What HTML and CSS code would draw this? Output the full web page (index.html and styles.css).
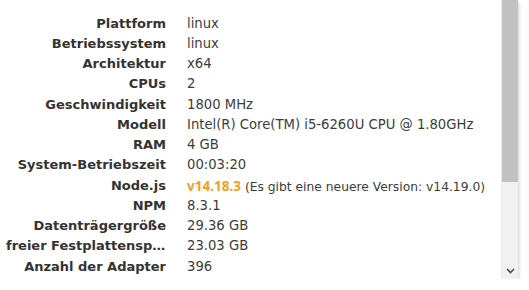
FILE: index.html
```html
<!DOCTYPE html>
<html lang="de">
<head>
<meta charset="utf-8">
<title>Systeminfo</title>
<link rel="stylesheet" href="styles.css">
</head>
<body>
<div class="panel">
  <div class="content">
    <div class="table">
      <div class="row"><div class="label">Plattform</div><div class="value">linux</div></div>
      <div class="row"><div class="label">Betriebssystem</div><div class="value">linux</div></div>
      <div class="row"><div class="label">Architektur</div><div class="value">x64</div></div>
      <div class="row"><div class="label">CPUs</div><div class="value">2</div></div>
      <div class="row"><div class="label">Geschwindigkeit</div><div class="value">1800 MHz</div></div>
      <div class="row"><div class="label">Modell</div><div class="value">Intel(R) Core(TM) i5-6260U CPU @ 1.80GHz</div></div>
      <div class="row"><div class="label">RAM</div><div class="value">4 GB</div></div>
      <div class="row"><div class="label">System-Betriebszeit</div><div class="value">00:03:20</div></div>
      <div class="row"><div class="label">Node.js</div><div class="value"><span class="warn">v14.18.3</span><span class="note"> (Es gibt eine neuere Version: v14.19.0)</span></div></div>
      <div class="row"><div class="label">NPM</div><div class="value">8.3.1</div></div>
      <div class="row"><div class="label">Datenträgergröße</div><div class="value">29.36 GB</div></div>
      <div class="row"><div class="label">freier Festplattenspeicher</div><div class="value">23.03 GB</div></div>
      <div class="row"><div class="label">Anzahl der Adapter</div><div class="value">396</div></div>
      <div class="row"><div class="label">Freier Arbeitsspeicher</div><div class="value">3.1 GB</div></div>
    </div>
  </div>
  <div class="scrollbar">
    <div class="thumb"></div>
    <div class="track"></div>
    <div class="arrow">
      <svg width="9" height="6" viewBox="0 0 9 6"><path d="M1 1 L4.5 4.5 L8 1" fill="none" stroke="#505050" stroke-width="1.6"/></svg>
    </div>
  </div>
</div>
</body>
</html>
```
FILE: styles.css
```css
html, body {
  margin: 0;
  padding: 0;
  background: #ffffff;
}
body {
  font-family: "DejaVu Sans", sans-serif;
  font-size: 13px;
  color: #333333;
}
.panel {
  display: flex;
  width: 518px;
  height: 279px;
  background: #ffffff;
  box-shadow: 0 2px 4px rgba(0, 0, 0, 0.3);
  overflow: hidden;
}
.content {
  flex: 1;
  overflow: hidden;
  padding-top: 13.5px;
}
.table {
  display: grid;
  grid-template-columns: 160px 1fr;
  grid-auto-rows: 20.25px;
  padding-left: 6px;
}
.row {
  display: contents;
}
.label {
  font-weight: bold;
  text-align: right;
  white-space: nowrap;
  overflow: hidden;
  text-overflow: ellipsis;
  line-height: 20.25px;
  color: #333333;
}
.value {
  padding-left: 21px;
  white-space: nowrap;
  line-height: 20.25px;
  font-size: 13.2px;
  color: #3c3c3c;
}
.warn {
  font-family: "Open Sans", sans-serif;
  font-size: 13.5px;
  color: #f5a01a;
  font-weight: bold;
}
.note {
  font-size: 12.3px;
}
.scrollbar {
  width: 17px;
  display: flex;
  flex-direction: column;
  background: #f1f1f1;
  border-left: 1px solid #ececec;
  box-sizing: border-box;
}
.thumb {
  height: 182px;
  background: #c1c1c1;
}
.track {
  flex: 1;
}
.arrow {
  height: 17px;
  display: flex;
  align-items: center;
  justify-content: center;
}
```
